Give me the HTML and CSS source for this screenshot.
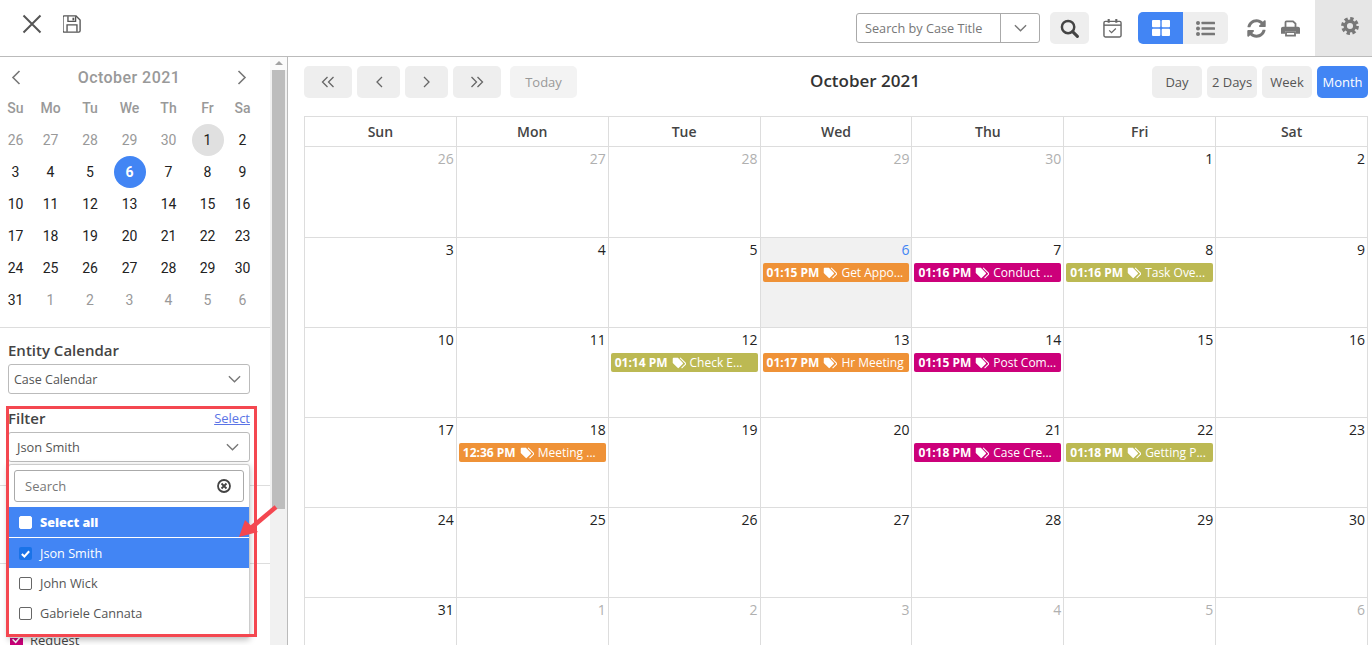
FILE: index.html
```html
<!DOCTYPE html>
<html>
<head>
    <title>Calendar</title>
    <link rel="stylesheet" href="styles.css">
</head>
<body>
    <svg class="defs" width="0" height="0">
        <symbol id="tag" viewBox="0 0 19 16">
            <path d="M1 2.2C1 1.5 1.5 1 2.2 1H8l6.6 6.6c.5.5.5 1.2 0 1.7l-5.3 5.3c-.5.5-1.2.5-1.7 0L1 8z" fill="#fff"/>
            <circle cx="4.6" cy="4.6" r="1.3" fill="currentColor"/>
            <path d="M11 1l7.2 7.2c.5.5.5 1.2 0 1.7L13 15" fill="none" stroke="#fff" stroke-width="1.5"/>
        </symbol>
        <symbol id="chev" viewBox="0 0 16 10">
            <path d="M1 1.500l7 7 7-7" fill="none" stroke="currentColor" stroke-width="1.700"/>
        </symbol>
    </svg>

    <header class="topbar">
        <div class="top-left">
            <svg class="icon-close" width="20" height="20" viewBox="0 0 20 20"><path d="M1.500 1.500l17 17M18.500 1.500l-17 17" stroke="#555" stroke-width="2" fill="none"/></svg>
            <svg class="icon-save" width="18" height="18" viewBox="0 0 20 20"><path d="M2.500 1h12l4.500 4.500v12a1.500 1.500 0 0 1-1.500 1.500h-16a1.500 1.500 0 0 1-1.500-1.500v-15a1.500 1.500 0 0 1 1.500-1.500z" fill="none" stroke="#555" stroke-width="1.500"/><path d="M5.500 1.500v5.500h8.500V1.500M4.500 18.500v-7.500h11v7.500" fill="none" stroke="#555" stroke-width="1.500"/><path d="M10.500 3h2v3h-2z" fill="#555"/></svg>
        </div>
        <div class="top-right">
            <div class="case-search">
                <span class="case-text">Search by Case Title</span>
                <span class="case-arrow"><svg width="13" height="8"><use href="#chev"/></svg></span>
            </div>
            <button class="btn-search">
                <svg width="19" height="19" viewBox="0 0 20 20"><circle cx="8.500" cy="8.500" r="6.500" fill="none" stroke="#444" stroke-width="2.600"/><path d="M13.300 13.300l5 5" stroke="#444" stroke-width="3.200" stroke-linecap="round"/></svg>
            </button>
            <svg class="icon-cal" width="19" height="20" viewBox="0 0 20 21"><rect x="1" y="3.500" width="18" height="16.500" rx="1.500" fill="none" stroke="#666" stroke-width="1.500"/><path d="M1 7.500h18" stroke="#666" stroke-width="1.500"/><path d="M6 1v4M14 1v4" stroke="#666" stroke-width="2.200"/><path d="M6.500 13l2.500 2.500 4.500-4.500" fill="none" stroke="#666" stroke-width="1.300"/></svg>
            <div class="view-toggle">
                <span class="toggle-on">
                    <svg width="18" height="16" viewBox="0 0 18 16"><rect x="0" y="0" width="8.300" height="7.300" rx="1" fill="#fff"/><rect x="9.700" y="0" width="8.300" height="7.300" rx="1" fill="#fff"/><rect x="0" y="8.700" width="8.300" height="7.300" rx="1" fill="#fff"/><rect x="9.700" y="8.700" width="8.300" height="7.300" rx="1" fill="#fff"/></svg>
                </span>
                <span class="toggle-off">
                    <svg width="19" height="15" viewBox="0 0 19 15"><g fill="#777"><circle cx="2" cy="2" r="2"/><circle cx="2" cy="7.500" r="2"/><circle cx="2" cy="13" r="2"/><rect x="5.500" y=".7" width="13.500" height="2.600" rx=".5"/><rect x="5.500" y="6.200" width="13.500" height="2.600" rx=".5"/><rect x="5.500" y="11.700" width="13.500" height="2.600" rx=".5"/></g></svg>
                </span>
            </div>
            <svg class="icon-sync" width="19" height="19" viewBox="0 0 512 512"><path fill="#777" d="M370.700 133.300C339.500 104 298.900 88 255.800 88c-77.500.1-144.300 53.200-162.800 126.900-1.300 5.400-6.100 9.100-11.600 9.100H24.100c-7.500 0-13.200-6.800-11.800-14.200C33.900 94.900 134.800 8 256 8c66.500 0 126.800 26.100 171.300 68.700L463 41c15.100-15.100 41-4.400 41 17v134c0 13.300-10.700 24-24 24H346c-21.400 0-32.100-25.900-17-41zM32 296h134c21.400 0 32.100 25.900 17 41l-41.700 41.700c31.200 29.300 71.800 45.300 114.900 45.300 77.400-.1 144.300-53.100 162.800-126.800 1.300-5.400 6.100-9.100 11.600-9.100h57.300c7.500 0 13.200 6.800 11.800 14.200C478.100 417.100 377.200 504 256 504c-66.500 0-126.800-26.100-171.300-68.700L49 471c-15.100 15.100-41 4.400-41-17V320c0-13.300 10.700-24 24-24z"/></svg>
            <svg class="icon-print" width="19" height="17" viewBox="0 0 19 19" preserveAspectRatio="none"><path d="M4.500 8V2.500a1 1 0 0 1 1-1h6.500l2.500 2.500v4" fill="none" stroke="#777" stroke-width="1.800"/><path d="M2 7.500h15a2 2 0 0 1 2 2v6h-4v-3H4v3H0v-6a2 2 0 0 1 2-2z" fill="#777"/><path d="M5 13.500h9v4H5z" fill="none" stroke="#777" stroke-width="1.800"/></svg>
            <div class="settings">
                <svg width="18" height="18" viewBox="0 0 20 20"><circle cx="10" cy="10" r="5.300" fill="none" stroke="#777" stroke-width="3.800"/><circle cx="10" cy="10" r="8" fill="none" stroke="#777" stroke-width="3.800" stroke-dasharray="3.600 2.680"/></svg>
            </div>
        </div>
    </header>

    <div class="page">
        <aside class="sidebar">
            <div class="side-inner">
                <div class="mini-head">
                    <svg width="10" height="15" viewBox="0 0 10 15"><path d="M8.500 1L2 7.500 8.500 14" fill="none" stroke="#777" stroke-width="1.600"/></svg>
                    <span class="mini-title">October 2021</span>
                    <svg width="10" height="15" viewBox="0 0 10 15"><path d="M1.500 1L8 7.500 1.500 14" fill="none" stroke="#777" stroke-width="1.600"/></svg>
                </div>
                <div class="mini-cal">
                    <span class="dow">Su</span><span class="dow">Mo</span><span class="dow">Tu</span><span class="dow">We</span><span class="dow">Th</span><span class="dow">Fr</span><span class="dow">Sa</span>
                    <span class="off">26</span><span class="off">27</span><span class="off">28</span><span class="off">29</span><span class="off">30</span><span><b class="day-first">1</b></span><span>2</span>
                    <span>3</span><span>4</span><span>5</span><span><b class="day-sel">6</b></span><span>7</span><span>8</span><span>9</span>
                    <span>10</span><span>11</span><span>12</span><span>13</span><span>14</span><span>15</span><span>16</span>
                    <span>17</span><span>18</span><span>19</span><span>20</span><span>21</span><span>22</span><span>23</span>
                    <span>24</span><span>25</span><span>26</span><span>27</span><span>28</span><span>29</span><span>30</span>
                    <span>31</span><span class="off">1</span><span class="off">2</span><span class="off">3</span><span class="off">4</span><span class="off">5</span><span class="off">6</span>
                </div>
                <hr class="side-line line-top">
                <div class="side-section">
                    <div class="side-label">Entity Calendar</div>
                    <div class="select">
                        <span>Case Calendar</span>
                        <svg width="13" height="8"><use href="#chev"/></svg>
                    </div>
                </div>
                <div class="filter">
                    <div class="filter-head">
                        <span class="side-label">Filter</span>
                        <a class="select-link" href="#">Select</a>
                    </div>
                    <div class="select select-filter">
                        <span>Json Smith</span>
                        <svg width="13" height="8"><use href="#chev"/></svg>
                    </div>
                    <div class="dropdown">
                        <div class="drop-search">
                            <span>Search</span>
                            <svg width="16" height="16" viewBox="0 0 16 16"><circle cx="8" cy="8" r="6" fill="none" stroke="#444" stroke-width="1.800"/><path d="M5.500 5.500l5 5M10.500 5.500l-5 5" stroke="#444" stroke-width="1.800"/></svg>
                        </div>
                        <div class="opt opt-on opt-all"><i class="box"></i>Select all</div>
                        <div class="opt opt-on"><i class="box box-on"><svg width="11" height="11" viewBox="0 0 12 12"><path d="M2 6.500l2.800 2.800L10 3.500" fill="none" stroke="#fff" stroke-width="2.200"/></svg></i>Json Smith</div>
                        <div class="opt"><i class="box"></i>John Wick</div>
                        <div class="opt"><i class="box"></i>Gabriele Cannata</div>
                    </div>
                    <div class="red-box"></div>
                    <svg class="red-arrow" width="40" height="38" viewBox="0 0 40 38"><path d="M38 4L13 25" stroke="#f44750" stroke-width="4.500"/><path d="M1 34L7 17 20 29z" fill="#f44750"/></svg>
                </div>
                <hr class="side-line">
                <hr class="side-line line-b">
                <div class="check-row"><i class="check-mag"><svg width="11" height="10" viewBox="0 0 14 12"><path d="M2 5l4 4 6-7" fill="none" stroke="#fff" stroke-width="2"/></svg></i>Request</div>
            </div>
            <div class="scrollbar">
                <div class="scroll-up"></div>
                <div class="scroll-thumb"></div>
            </div>
        </aside>

        <main class="main">
            <div class="cal-toolbar">
                <div class="nav-group">
                    <button class="nav-btn wide"><svg width="14" height="12" viewBox="0 0 14 12"><path d="M6.500 1L1.500 6l5 5M12.500 1l-5 5 5 5" fill="none" stroke="#666" stroke-width="1.300"/></svg></button>
                    <button class="nav-btn"><svg width="8" height="12" viewBox="0 0 8 12"><path d="M7 1L2 6l5 5" fill="none" stroke="#666" stroke-width="1.300"/></svg></button>
                    <button class="nav-btn"><svg width="8" height="12" viewBox="0 0 8 12"><path d="M1 1l5 5-5 5" fill="none" stroke="#666" stroke-width="1.300"/></svg></button>
                    <button class="nav-btn wide"><svg width="14" height="12" viewBox="0 0 14 12"><path d="M1.500 1l5 5-5 5M7.500 1l5 5-5 5" fill="none" stroke="#666" stroke-width="1.300"/></svg></button>
                    <button class="today-btn">Today</button>
                </div>
                <h2 class="cal-title">October 2021</h2>
                <div class="range-group">
                    <button class="range-btn">Day</button>
                    <button class="range-btn">2 Days</button>
                    <button class="range-btn">Week</button>
                    <button class="range-btn active">Month</button>
                </div>
            </div>

            <div class="month">
                <div class="dow-cell">Sun</div><div class="dow-cell">Mon</div><div class="dow-cell">Tue</div><div class="dow-cell">Wed</div><div class="dow-cell">Thu</div><div class="dow-cell">Fri</div><div class="dow-cell">Sat</div>

                <div class="cell muted"><span class="num">26</span></div>
                <div class="cell muted"><span class="num">27</span></div>
                <div class="cell muted"><span class="num">28</span></div>
                <div class="cell muted"><span class="num">29</span></div>
                <div class="cell muted"><span class="num">30</span></div>
                <div class="cell"><span class="num">1</span></div>
                <div class="cell"><span class="num">2</span></div>

                <div class="cell"><span class="num">3</span></div>
                <div class="cell"><span class="num">4</span></div>
                <div class="cell"><span class="num">5</span></div>
                <div class="cell today"><span class="num">6</span>
                    <div class="event orange"><b>01:15 PM</b><svg width="14" height="12"><use href="#tag"/></svg>Get Appo...</div></div>
                <div class="cell"><span class="num">7</span>
                    <div class="event pink"><b>01:16 PM</b><svg width="14" height="12"><use href="#tag"/></svg>Conduct ...</div></div>
                <div class="cell"><span class="num">8</span>
                    <div class="event olive"><b>01:16 PM</b><svg width="14" height="12"><use href="#tag"/></svg>Task Ove...</div></div>
                <div class="cell"><span class="num">9</span></div>

                <div class="cell"><span class="num">10</span></div>
                <div class="cell"><span class="num">11</span></div>
                <div class="cell"><span class="num">12</span>
                    <div class="event olive"><b>01:14 PM</b><svg width="14" height="12"><use href="#tag"/></svg>Check E...</div></div>
                <div class="cell"><span class="num">13</span>
                    <div class="event orange"><b>01:17 PM</b><svg width="14" height="12"><use href="#tag"/></svg>Hr Meeting</div></div>
                <div class="cell"><span class="num">14</span>
                    <div class="event pink"><b>01:15 PM</b><svg width="14" height="12"><use href="#tag"/></svg>Post Com...</div></div>
                <div class="cell"><span class="num">15</span></div>
                <div class="cell"><span class="num">16</span></div>

                <div class="cell"><span class="num">17</span></div>
                <div class="cell"><span class="num">18</span>
                    <div class="event orange"><b>12:36 PM</b><svg width="14" height="12"><use href="#tag"/></svg>Meeting ...</div></div>
                <div class="cell"><span class="num">19</span></div>
                <div class="cell"><span class="num">20</span></div>
                <div class="cell"><span class="num">21</span>
                    <div class="event pink"><b>01:18 PM</b><svg width="14" height="12"><use href="#tag"/></svg>Case Cre...</div></div>
                <div class="cell"><span class="num">22</span>
                    <div class="event olive"><b>01:18 PM</b><svg width="14" height="12"><use href="#tag"/></svg>Getting P...</div></div>
                <div class="cell"><span class="num">23</span></div>

                <div class="cell"><span class="num">24</span></div>
                <div class="cell"><span class="num">25</span></div>
                <div class="cell"><span class="num">26</span></div>
                <div class="cell"><span class="num">27</span></div>
                <div class="cell"><span class="num">28</span></div>
                <div class="cell"><span class="num">29</span></div>
                <div class="cell"><span class="num">30</span></div>

                <div class="cell"><span class="num">31</span></div>
                <div class="cell muted"><span class="num">1</span></div>
                <div class="cell muted"><span class="num">2</span></div>
                <div class="cell muted"><span class="num">3</span></div>
                <div class="cell muted"><span class="num">4</span></div>
                <div class="cell muted"><span class="num">5</span></div>
                <div class="cell muted"><span class="num">6</span></div>
            </div>
        </main>
    </div>
</body>
</html>
```

FILE: styles.css
```css
* {
    box-sizing: border-box;
}

html, body {
    height: 100%;
}

body {
    margin: 0;
    overflow: hidden;
    background-color: #fff;
    color: #333;
    font-family: "Open Sans", sans-serif;
    font-size: 13px;
}

button {
    font-family: inherit;
    border: none;
    padding: 0;
}

.defs {
    display: block;
    height: 0;
}

/* top bar */
.topbar {
    display: flex;
    justify-content: space-between;
    height: 57px;
    border-bottom: 1px solid #bbb;
}

.top-left {
    display: flex;
    align-items: flex-start;
    gap: 21px;
    padding: 14px 0 0 22px;
}

.icon-save {
    margin-top: 1px;
}

.top-right {
    display: flex;
    align-items: flex-start;
}

.case-search {
    display: flex;
    width: 184px;
    height: 30px;
    margin-top: 13px;
    border: 1px solid #aaa;
    border-radius: 3px;
}

.case-text {
    flex: 1;
    padding-left: 8px;
    font-size: 12.700px;
    line-height: 28px;
    color: #777;
}

.case-arrow {
    display: flex;
    align-items: center;
    justify-content: center;
    width: 39px;
    border-left: 1px solid #aaa;
    color: #777;
}

.btn-search {
    display: flex;
    align-items: center;
    justify-content: center;
    width: 39px;
    height: 32px;
    margin: 12px 0 0 10px;
    border-radius: 5px;
    background-color: #eee;
}

.icon-cal {
    margin: 18px 0 0 14px;
}

.view-toggle {
    display: flex;
    width: 90px;
    height: 32px;
    margin: 12px 0 0 16px;
    border-radius: 5px;
    overflow: hidden;
}

.toggle-on,
.toggle-off {
    display: flex;
    align-items: center;
    justify-content: center;
    width: 45px;
}

.toggle-on {
    background-color: #4285f4;
}

.toggle-off {
    background-color: #eee;
}

.icon-sync {
    margin: 19px 0 0 19px;
}

.icon-print {
    margin: 20px 0 0 15px;
}

.settings {
    display: flex;
    justify-content: center;
    width: 57px;
    height: 56px;
    margin-left: 15px;
    padding: 17px 0 0 13px;
    background-color: #e6e6e6;
}

/* page */
.page {
    display: flex;
    height: 588px;
}

.sidebar {
    display: flex;
    flex: none;
    width: 288px;
    border-right: 1px solid #bbb;
    overflow: hidden;
}

.side-inner {
    flex: none;
    width: 270px;
}

.scrollbar {
    flex: none;
    width: 17px;
    background-color: #f1f1f1;
}

.scroll-up {
    height: 13px;
    background-color: #fbfbfb;
    position: relative;
}

.scroll-up::after {
    content: "";
    position: absolute;
    top: 4px;
    left: 5px;
    border-left: 4px solid transparent;
    border-right: 4px solid transparent;
    border-bottom: 4px solid #a3a3a3;
}

.scroll-thumb {
    width: 13px;
    height: 439px;
    margin-left: 2px;
    background-color: #bdbdbd;
}

/* mini calendar */
.mini-head {
    display: flex;
    align-items: center;
    justify-content: space-between;
    height: 26px;
    margin-top: 7px;
    padding: 0 23px 0 11px;
}

.mini-title {
    font-family: Roboto, sans-serif;
    font-size: 16px;
    font-weight: 500;
    color: #999;
    letter-spacing: .45px;
}

.mini-cal {
    display: grid;
    grid-template-columns: 31px 39px 40px 39px 39px 39px 31px;
    grid-auto-rows: 32px;
    margin-top: 2px;
    font-family: Roboto, sans-serif;
    font-size: 14px;
    color: #222;
}

.mini-cal span {
    display: flex;
    align-items: center;
    justify-content: center;
}

.mini-cal .off,
.mini-cal .dow {
    color: #999;
}

.mini-cal .dow {
    font-weight: 500;
}

.mini-cal b {
    display: flex;
    align-items: center;
    justify-content: center;
    width: 32px;
    height: 32px;
    border-radius: 50%;
    font-weight: 400;
}

.mini-cal .day-first {
    background-color: #e0e0e0;
}

.mini-cal .day-sel {
    background-color: #4285f4;
    color: #fff;
    font-weight: 700;
}

.side-line {
    margin: 0;
    border: none;
    border-top: 1px solid #ddd;
}

.line-top {
    margin-top: 11px;
}

.line-b {
    margin-top: 77px;
}

.side-section {
    padding: 12px 20px 0 8px;
}

.side-label {
    font-size: 15px;
    font-weight: 600;
    color: #444;
    line-height: 20px;
}

.select {
    display: flex;
    align-items: center;
    justify-content: space-between;
    height: 30px;
    margin-top: 4px;
    padding: 0 8px 0 5px;
    border: 1px solid #bbb;
    border-radius: 3px;
    font-size: 12.500px;
    color: #555;
}

.select svg {
    color: #777;
}

/* filter */
.filter {
    position: relative;
    height: 80px;
    margin-top: 11px;
    padding: 0 20px 0 8px;
}

.filter-head {
    display: flex;
    align-items: center;
    justify-content: space-between;
    height: 27px;
    padding-bottom: 2px;
}

.select-link {
    font-size: 13px;
    color: #5b74e6;
}

.select-filter {
    margin-top: 0;
    padding: 0 10px 0 8px;
    font-size: 12.800px;
}

.dropdown {
    position: absolute;
    z-index: 3;
    top: 59px;
    left: 8px;
    width: 242px;
    height: 174px;
    padding-top: 5px;
    background-color: #fff;
    border: 1px solid #ccc;
    border-radius: 3px;
    box-shadow: 0 2px 6px rgba(0, 0, 0, .25);
}

.drop-search {
    display: flex;
    align-items: center;
    justify-content: space-between;
    height: 32px;
    margin: 0 5px 5px;
    padding: 0 11px 0 10px;
    border: 1px solid #aaa;
    border-radius: 3px;
    color: #777;
}

.opt {
    display: flex;
    align-items: center;
    gap: 8px;
    height: 30px;
    padding-left: 10px;
    font-size: 12.700px;
    color: #555;
}

.opt-on {
    background-color: #4285f4;
    color: #fff;
}

.opt-all {
    height: 31px;
    border-bottom: 1px solid #fff;
    font-size: 12.500px;
    font-weight: 800;
}

.box {
    flex: none;
    display: flex;
    align-items: center;
    justify-content: center;
    width: 13px;
    height: 13px;
    border: 1px solid #666;
    border-radius: 2px;
    background-color: #fff;
}

.opt-on .box {
    border-color: #fff;
}

.opt-on .box-on {
    border: none;
    background-color: #1a73e8;
}

.red-box {
    position: absolute;
    z-index: 4;
    top: 1px;
    left: 6px;
    width: 251px;
    height: 231px;
    border: 3px solid #f44750;
    pointer-events: none;
}

.red-arrow {
    position: absolute;
    z-index: 5;
    top: 98px;
    left: 238px;
}

.check-row {
    display: flex;
    align-items: center;
    gap: 7px;
    margin-top: 67px;
    padding-left: 10px;
    font-size: 13px;
    color: #444;
}

.check-mag {
    display: flex;
    align-items: center;
    justify-content: center;
    width: 13px;
    height: 14px;
    border-radius: 2px;
    background-color: #cc007a;
}

/* main calendar */
.main {
    flex: 1;
    padding: 9px 4px 0 16px;
}

.cal-toolbar {
    display: flex;
    align-items: flex-start;
    justify-content: space-between;
    position: relative;
    height: 50px;
}

.nav-group,
.range-group {
    display: flex;
    gap: 5px;
}

.nav-btn {
    display: flex;
    align-items: center;
    justify-content: center;
    width: 43px;
    height: 32px;
    border-radius: 5px;
    background-color: #eee;
}

.nav-btn.wide {
    width: 48px;
}

.today-btn {
    width: 67px;
    height: 32px;
    margin-left: 4px;
    border-radius: 5px;
    background-color: #f3f3f3;
    color: #999;
    font-size: 13px;
}

.cal-title {
    position: absolute;
    left: 58px;
    right: 0;
    top: 3px;
    margin: 0;
    text-align: center;
    font-size: 17px;
    font-weight: 600;
    color: #333;
    line-height: 24px;
    pointer-events: none;
}

.range-btn {
    width: 50px;
    height: 32px;
    border-radius: 5px;
    background-color: #eee;
    color: #555;
    font-size: 13px;
}

.range-btn.active {
    width: 51px;
    background-color: #4285f4;
    color: #fff;
}

.month {
    display: grid;
    grid-template-columns: repeat(7, 1fr);
    grid-template-rows: 30px 91px;
    grid-auto-rows: 90px;
    width: 1064px;
    border-top: 1px solid #ddd;
    border-left: 1px solid #ddd;
}

.dow-cell {
    border-right: 1px solid #ddd;
    border-bottom: 1px solid #ddd;
    text-align: center;
    font-size: 14px;
    font-weight: 600;
    line-height: 29px;
    color: #444;
}

.cell {
    padding-top: 2px;
    border-right: 1px solid #ddd;
    border-bottom: 1px solid #ddd;
}

.num {
    display: block;
    height: 22px;
    padding-right: 2px;
    text-align: right;
    font-size: 14px;
    line-height: 19px;
    color: #222;
}

.muted .num {
    color: #b0b0b0;
}

.today {
    background-color: #f1f1f1;
}

.today .num {
    color: #4285f4;
}

.event {
    display: flex;
    align-items: center;
    height: 19px;
    margin: 1px 2px 0;
    padding-left: 4px;
    border-radius: 2px;
    color: #fff;
    font-size: 12px;
    white-space: nowrap;
    overflow: hidden;
}

.event b {
    font-weight: 700;
    margin-right: 4px;
}

.event svg {
    flex: none;
    margin-right: 4px;
}

.orange {
    background-color: #ef9237;
}

.pink {
    background-color: #cc007a;
}

.olive {
    background-color: #bcb953;
}
```
